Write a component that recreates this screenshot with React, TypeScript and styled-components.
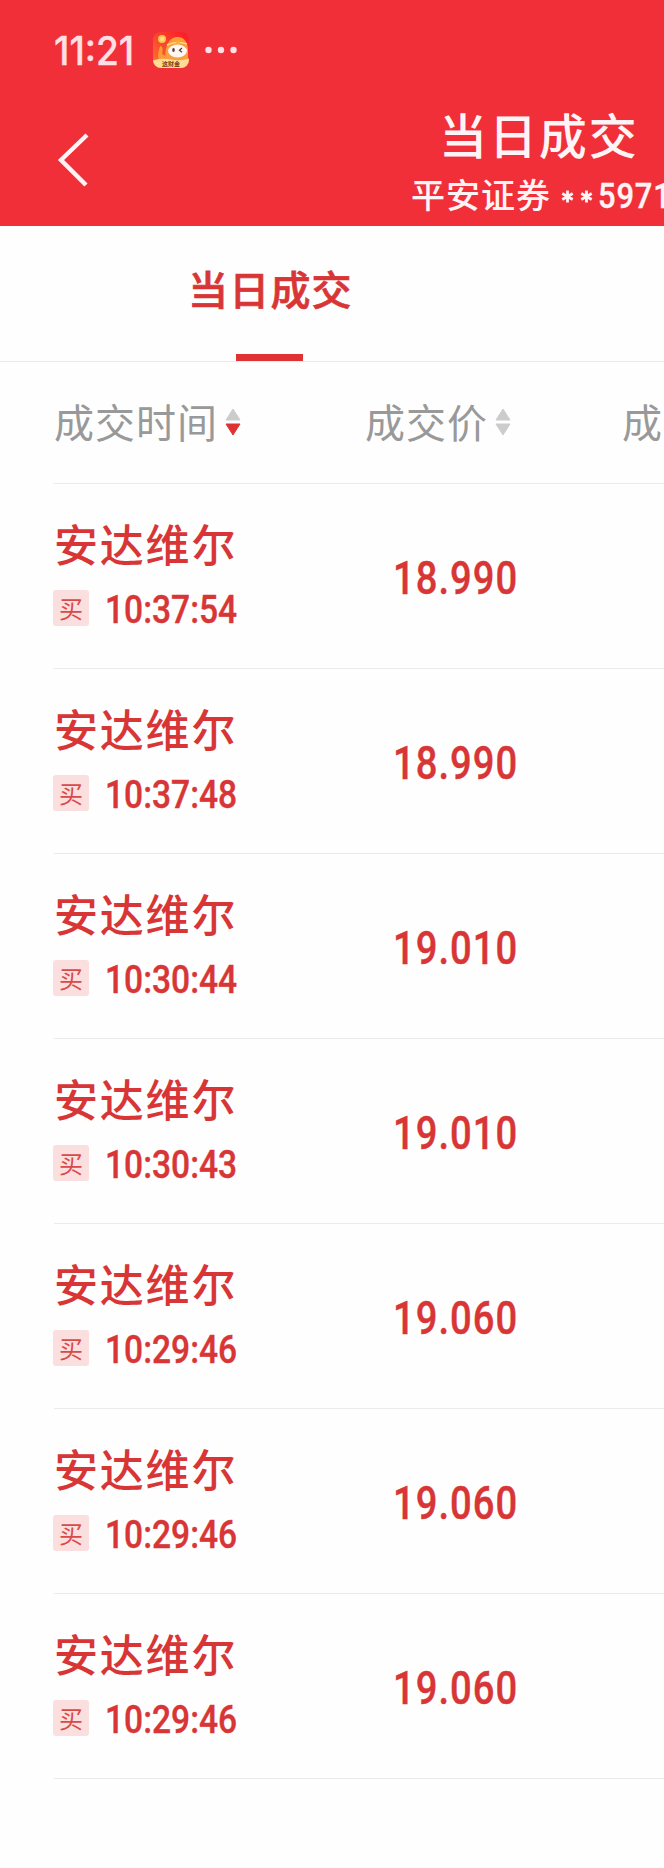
import React from "react";
import styled, { createGlobalStyle } from "styled-components";

const cjk = '"Noto Sans CJK SC", sans-serif';
const latin = 'Roboto, "Noto Sans CJK SC", sans-serif';

const GlobalStyle = createGlobalStyle`
  * { box-sizing: border-box; }
  html, body { margin: 0; padding: 0; background: #fefefe; overflow: hidden; }
`;

const Screen = styled.div`
  width: 664px;
  height: 1868px;
  overflow: hidden;
  background: #fefefe;
  font-family: ${cjk};
  color: #d83636;
  white-space: nowrap;
`;

const Header = styled.header`
  height: 226px;
  background: #f12f38;
  color: #fff4f5;
`;

const StatusBar = styled.div`
  height: 100px;
  padding-left: 54px;
  display: flex;
  align-items: center;
`;

const Digits = styled.span<{ $size: number; $scale: number; $gap?: number }>`
  display: inline-block;
  font-family: ${latin};
  font-size: ${(p) => p.$size}px;
  line-height: ${(p) => p.$size}px;
  font-weight: 500;
  letter-spacing: ${(p) => p.$gap ?? 0}px;
  transform: scaleX(${(p) => p.$scale});
  transform-origin: left center;
  -webkit-text-stroke: 0.4px currentColor;
`;

const Clock = styled.div`
  width: 99px;
  color: #ffdfe3;

  ${Digits} {
    font-family: Inter, sans-serif;
  }
`;

const Dots = styled.svg`
  margin-left: 16px;
`;

const TitleBar = styled.div`
  height: 126px;
  padding-left: 56px;
  display: flex;
  align-items: flex-start;
`;

const BackButton = styled.button`
  width: 40px;
  height: 60px;
  margin: 30px 0 0;
  padding: 0;
  border: 0;
  background: none;
`;

const TitleBlock = styled.div`
  margin-left: 315px;
  padding-top: 5px;
`;

const Title = styled.h1`
  margin: 0 0 0 28px;
  font-size: 48px;
  line-height: 56px;
  font-weight: 500;
  letter-spacing: 1.9px;
`;

const Account = styled.div`
  display: flex;
  align-items: center;
  font-size: 34px;
  line-height: 66px;
  font-weight: 500;
  letter-spacing: 1px;
`;

const Mask = styled.span`
  display: flex;
  gap: 6px;
  margin: 4px 5px 0 10px;
`;

const AccountNumber = styled.span`
  display: flex;
  padding-top: 6px;
`;

const Tabs = styled.nav`
  height: 136px;
  padding-left: 188px;
  border-bottom: 1px solid #ebebeb;
  display: flex;
`;

const Tab = styled.div`
  display: flex;
  flex-direction: column;
  align-items: center;
  justify-content: space-between;
  font-size: 40px;
  line-height: 124px;
  font-weight: 500;
  letter-spacing: 1.2px;
  -webkit-text-stroke: 0.7px currentColor;
`;

const TabLabel = styled.span`
  height: 124px;
`;

const Underline = styled.div`
  width: 67px;
  height: 7px;
  margin-right: 2px;
  background: #df3333;
`;

const ColumnHeads = styled.div`
  height: 122px;
  margin-left: 54px;
  display: grid;
  grid-template-columns: 311px 257px 200px;
  align-items: center;
  border-bottom: 1px solid #ebebeb;
`;

const ColumnHead = styled.div`
  display: flex;
  align-items: center;
  gap: 7px;
  color: #999;
  font-size: 40px;
  line-height: 60px;
  letter-spacing: 1px;
`;

const ColumnLabel = styled.span`
  padding-bottom: 3px;
`;

const SortArrows = styled.svg`
  margin-bottom: 2px;
`;

const Row = styled.div`
  height: 185px;
  margin-left: 54px;
  display: grid;
  grid-template-columns: 339px 1fr;
  border-bottom: 1px solid #ebebeb;
`;

const Stock = styled.div`
  padding-top: 29px;
`;

const StockName = styled.div`
  font-size: 44px;
  line-height: 60px;
  font-weight: 500;
  letter-spacing: 1.8px;
`;

const Trade = styled.div`
  display: flex;
  align-items: center;
  height: 36px;
  margin-top: 17px;
  margin-left: -1px;
`;

const Side = styled.span`
  width: 36px;
  height: 36px;
  margin-right: 16px;
  border-radius: 3px;
  background: #fbdfdf;
  color: #d94a4a;
  font-size: 24px;
  line-height: 35px;
  text-align: center;
`;

const Time = styled.span`
  display: flex;
  padding-top: 4px;
`;

const Price = styled.div`
  display: flex;
  align-items: center;
  padding-top: 4px;
`;

const trades = [
  ["10:37:54", "18.990"],
  ["10:37:48", "18.990"],
  ["10:30:44", "19.010"],
  ["10:30:43", "19.010"],
  ["10:29:46", "19.060"],
  ["10:29:46", "19.060"],
  ["10:29:46", "19.060"],
];

function SortIcon({ desc }: { desc?: boolean }) {
  return (
    <SortArrows width="16" height="30" viewBox="0 0 16 30">
      <path d="M8 2 15 13H1Z" fill="#ccc" stroke="#ccc" strokeLinejoin="round" />
      <path d="M8 28 15 17H1Z" fill={desc ? "#df3333" : "#ccc"} stroke={desc ? "#df3333" : "#ccc"} strokeLinejoin="round" />
    </SortArrows>
  );
}

function AppBadge() {
  return (
    <svg width="36" height="36" viewBox="0 0 36 36">
      <defs>
        <linearGradient id="sky" x1="0" y1="1" x2="1" y2="0">
          <stop offset="0" stopColor="#fb7a2c" />
          <stop offset="0.55" stopColor="#f9402c" />
          <stop offset="1" stopColor="#fb1626" />
        </linearGradient>
        <linearGradient id="fur" x1="0" y1="0" x2="0" y2="1">
          <stop offset="0" stopColor="#ff9a3a" />
          <stop offset="1" stopColor="#f9a040" />
        </linearGradient>
        <clipPath id="tile"><rect width="36" height="36" rx="8" /></clipPath>
      </defs>
      <g clipPath="url(#tile)">
        <rect width="36" height="36" fill="url(#sky)" />
        <path d="M13 31C11 20 13 7 23 5c8-1 12 5 12 14v12Z" fill="url(#fur)" />
        <path d="M6 28c-2-5 0-9 1-14 3 0 3 4 2 8l5 3v5Z" fill="#ff9a38" />
        <circle cx="9" cy="7" r="4" fill="#ffc552" />
        <circle cx="9" cy="7" r="2" fill="#ffe08a" />
        <path d="M14 13c6-3 14-3 20-1" fill="none" stroke="#ffdb8a" strokeWidth="1.4" />
        <path d="m25 8 2.500 3-2.500 2-2.500-2Z" fill="#f6b437" />
        <ellipse cx="24.500" cy="19" rx="9.500" ry="6.500" fill="#fdf6f1" />
        <ellipse cx="20.500" cy="18" rx="1.300" ry="2" fill="#57423f" />
        <path d="m29 16-2.500 2.200 2.500 2" fill="none" stroke="#57423f" strokeWidth="1.300" />
        <path d="M0 28.500c5-2 12-2 18-1s12 1 18-1v10H0Z" fill="#ffdb93" />
        <text x="18" y="34" textAnchor="middle" fontSize="6" fontWeight="700" fill="#7a3d10" fontFamily="Noto Sans CJK SC">这财金</text>
      </g>
    </svg>
  );
}

const Star = () => (
  <svg width="13" height="13" viewBox="0 0 13 13">
    <path d="M6.500 .5v12M1.300 3.500l10.400 6M11.700 3.500l-10.400 6" stroke="#fff4f5" strokeWidth="2.800" />
  </svg>
);

export default function App() {
  return (
    <Screen>
      <GlobalStyle />
      <Header>
        <StatusBar>
          <Clock><Digits $size={39} $scale={0.95}>11:21</Digits></Clock>
          <AppBadge />
          <Dots width="34" height="8" viewBox="0 0 34 8" fill="#ffdfe3">
            <circle cx="3.500" cy="4" r="3.200" />
            <circle cx="16" cy="4" r="3.200" />
            <circle cx="28.500" cy="4" r="3.200" />
          </Dots>
        </StatusBar>
        <TitleBar>
          <BackButton aria-label="返回">
            <svg width="40" height="60" viewBox="0 0 40 60">
              <path d="M31 5 5 30l25 25" fill="none" stroke="#fff4f5" strokeWidth="4.400" />
            </svg>
          </BackButton>
          <TitleBlock>
            <Title>当日成交</Title>
            <Account>
              平安证券
              <Mask><Star /><Star /></Mask>
              <AccountNumber><Digits $size={35.5} $scale={0.87} $gap={1}>5971</Digits></AccountNumber>
            </Account>
          </TitleBlock>
        </TitleBar>
      </Header>
      <Tabs>
        <Tab>
          <TabLabel>当日成交</TabLabel>
          <Underline />
        </Tab>
      </Tabs>
      <ColumnHeads>
        <ColumnHead><ColumnLabel>成交时间</ColumnLabel><SortIcon desc /></ColumnHead>
        <ColumnHead><ColumnLabel>成交价</ColumnLabel><SortIcon /></ColumnHead>
        <ColumnHead><ColumnLabel>成交量</ColumnLabel></ColumnHead>
      </ColumnHeads>
      {trades.map(([time, price], i) => (
        <Row key={i}>
          <Stock>
            <StockName>安达维尔</StockName>
            <Trade>
              <Side>买</Side>
              <Time><Digits $size={39.5} $scale={0.85}>{time}</Digits></Time>
            </Trade>
          </Stock>
          <Price><Digits $size={46} $scale={0.83} $gap={1.2}>{price}</Digits></Price>
        </Row>
      ))}
    </Screen>
  );
}
